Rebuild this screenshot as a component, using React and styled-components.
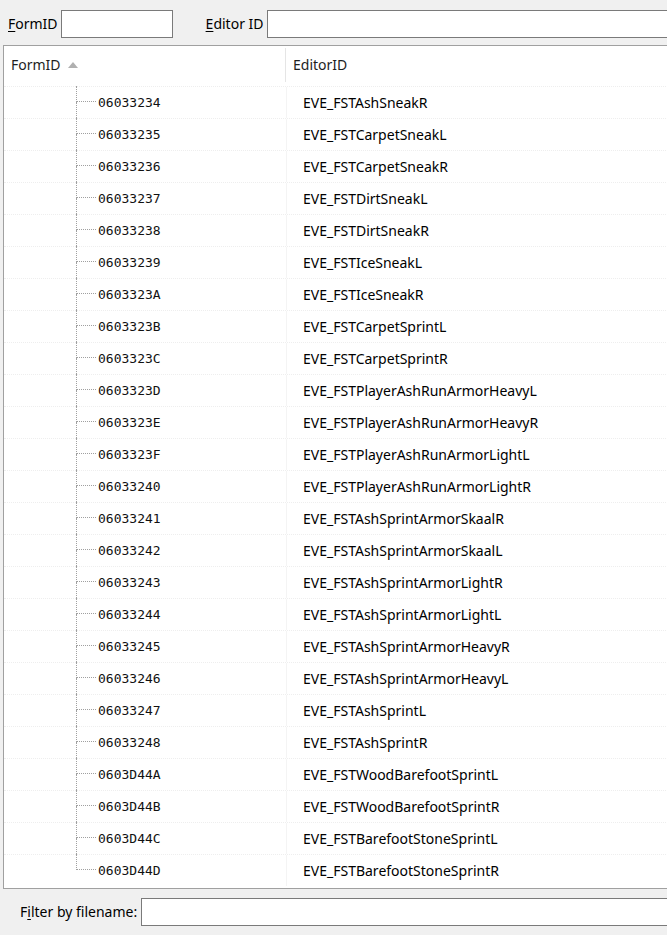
import React from "react";
import styled, { createGlobalStyle } from "styled-components";

const Global = createGlobalStyle`
  html, body { margin: 0; padding: 0; background: #f0f0f0; overflow: hidden; }
  body { font-family: "Noto Sans", "Segoe UI", sans-serif; font-size: 14px; color: #000; }
`;

const Window = styled.div`
  width: 667px;
  height: 935px;
  display: flex;
  flex-direction: column;
  overflow: hidden;
  background: #f0f0f0;
`;

const TopBar = styled.div`
  height: 45px;
  display: flex;
  align-items: flex-start;
  padding: 10px 0 0 8px;
  box-sizing: border-box;
  flex: none;
`;

const Label = styled.label`
  font-family: "Noto Sans", sans-serif;
  font-size: 14px;
  color: #000;
  line-height: 28px;
  white-space: nowrap;
  margin-right: ${(p) => p.$gap || 3}px;
  u { text-decoration: underline; text-underline-offset: 2px; }
`;

const TextInput = styled.input`
  box-sizing: border-box;
  height: 28px;
  width: ${(p) => p.$width}px;
  border: 1px solid #7a7a7a;
  background: #fff;
  margin: 0 ${(p) => p.$after || 0}px 0 0;
  padding: 0 4px;
  outline: none;
  flex: none;
`;

const Panel = styled.div`
  margin-left: 3px;
  width: 700px;
  height: 844px;
  box-sizing: border-box;
  border: 1px solid #a0a0a0;
  background: #fff;
  display: flex;
  flex-direction: column;
  flex: none;
  overflow: hidden;
`;

const Header = styled.div`
  height: 40px;
  display: flex;
  flex: none;
`;

const HeaderCell = styled.div`
  width: ${(p) => p.$width}px;
  box-sizing: border-box;
  display: flex;
  align-items: center;
  padding-left: 7px;
  padding-bottom: 2px;
  font-size: 14px;
  color: #1e1e1e;
  border-right: ${(p) => (p.$divider ? "1px solid #e5e5e5" : "none")};
  margin: 2px 0 4px;
  flex: none;
`;

const SortArrow = styled.svg`
  margin-left: 7px;
  margin-top: 1px;
`;

const Row = styled.div`
  height: 32px;
  box-sizing: border-box;
  display: flex;
  border-top: 1px dotted #eeeeee;
  flex: none;
`;

const TreeCell = styled.div`
  width: 282px;
  display: flex;
  align-items: stretch;
  flex: none;
  border-right: 1px solid #f4f4f4;
`;

const Connector = styled.div`
  margin-left: 72px;
  width: 20px;
  display: flex;
  flex-direction: column;
  margin-top: -1px;
`;

const ConnUpper = styled.div`
  height: 16px;
  border-left: 1px dotted #a0a0a0;
  border-bottom: 1px dotted #a0a0a0;
  box-sizing: border-box;
`;

const ConnLower = styled.div`
  flex: 1;
  border-left: 1px dotted ${(p) => (p.$last ? "transparent" : "#a0a0a0")};
`;

const FormIdText = styled.span`
  font-family: "DejaVu Sans Mono", monospace;
  font-size: 13px;
  color: #111;
  margin-left: 2px;
  align-self: center;
  margin-top: -1px;
`;

const EditorCell = styled.div`
  padding-left: 16px;
  display: flex;
  align-items: center;
  font-size: 14px;
  color: #000;
  margin-top: -1px;
  white-space: nowrap;
`;

const FilterBar = styled.div`
  flex: none;
  display: flex;
  align-items: flex-start;
  padding: 9px 0 0 20px;
  height: 46px;
  box-sizing: border-box;
`;

const ids = [
  ["06033234", "EVE_FSTAshSneakR"],
  ["06033235", "EVE_FSTCarpetSneakL"],
  ["06033236", "EVE_FSTCarpetSneakR"],
  ["06033237", "EVE_FSTDirtSneakL"],
  ["06033238", "EVE_FSTDirtSneakR"],
  ["06033239", "EVE_FSTIceSneakL"],
  ["0603323A", "EVE_FSTIceSneakR"],
  ["0603323B", "EVE_FSTCarpetSprintL"],
  ["0603323C", "EVE_FSTCarpetSprintR"],
  ["0603323D", "EVE_FSTPlayerAshRunArmorHeavyL"],
  ["0603323E", "EVE_FSTPlayerAshRunArmorHeavyR"],
  ["0603323F", "EVE_FSTPlayerAshRunArmorLightL"],
  ["06033240", "EVE_FSTPlayerAshRunArmorLightR"],
  ["06033241", "EVE_FSTAshSprintArmorSkaalR"],
  ["06033242", "EVE_FSTAshSprintArmorSkaalL"],
  ["06033243", "EVE_FSTAshSprintArmorLightR"],
  ["06033244", "EVE_FSTAshSprintArmorLightL"],
  ["06033245", "EVE_FSTAshSprintArmorHeavyR"],
  ["06033246", "EVE_FSTAshSprintArmorHeavyL"],
  ["06033247", "EVE_FSTAshSprintL"],
  ["06033248", "EVE_FSTAshSprintR"],
  ["0603D44A", "EVE_FSTWoodBarefootSprintL"],
  ["0603D44B", "EVE_FSTWoodBarefootSprintR"],
  ["0603D44C", "EVE_FSTBarefootStoneSprintL"],
  ["0603D44D", "EVE_FSTBarefootStoneSprintR"],
];

export default function App() {
  return (
    <>
      <Global />
      <Window>
        <TopBar>
          <Label $gap={3}><u>F</u>ormID</Label>
          <TextInput $width={112} $after={33} />
          <Label $gap={3}><u>E</u>ditor ID</Label>
          <TextInput $width={420} />
        </TopBar>
        <Panel>
          <Header>
            <HeaderCell $width={282} $divider>
              FormID
              <SortArrow width="10" height="6" viewBox="0 0 10 6">
                <path d="M0 6 L5 0 L10 6 Z" fill="#b0b0b0" />
              </SortArrow>
            </HeaderCell>
            <HeaderCell $width={300}>EditorID</HeaderCell>
          </Header>
          {ids.map(([fid, eid], i) => (
            <Row key={fid}>
              <TreeCell>
                <Connector>
                  <ConnUpper />
                  <ConnLower $last={i === ids.length - 1} />
                </Connector>
                <FormIdText>{fid}</FormIdText>
              </TreeCell>
              <EditorCell>{eid}</EditorCell>
            </Row>
          ))}
        </Panel>
        <FilterBar>
          <Label $gap={4}>F<u>i</u>lter by filename:</Label>
          <TextInput $width={540} />
        </FilterBar>
      </Window>
    </>
  );
}
